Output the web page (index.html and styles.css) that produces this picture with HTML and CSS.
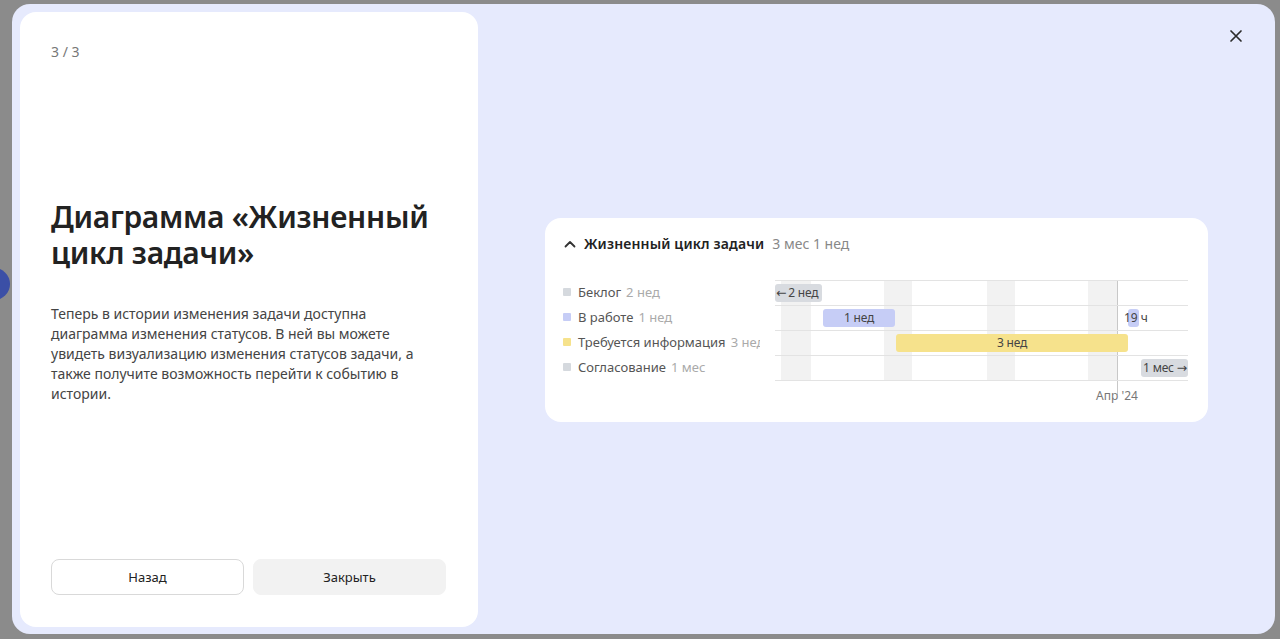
FILE: index.html
```html
<!DOCTYPE html>
<html lang="ru">
<head>
<meta charset="utf-8">
<title>Жизненный цикл задачи</title>
<link rel="stylesheet" href="styles.css">
</head>
<body>
<div class="bg-dot"></div>
<div class="modal">
  <section class="panel">
    <div class="counter">3 / 3</div>
    <h1 class="title">Диаграмма «Жизненный цикл задачи»</h1>
    <p class="desc">Теперь в истории изменения задачи доступна диаграмма изменения статусов. В ней вы можете увидеть визуализацию изменения статусов задачи, а также получите возможность перейти к событию в истории.</p>
    <div class="actions">
      <button class="btn btn-outline">Назад</button>
      <button class="btn btn-fill">Закрыть</button>
    </div>
  </section>
  <section class="stage">
    <div class="card">
      <div class="card-head">
        <svg class="chev" width="12" height="8" viewBox="0 0 12 8"><path d="M1.5 6.5 6 2l4.5 4.5" fill="none" stroke="#333" stroke-width="1.8" stroke-linecap="round" stroke-linejoin="round"/></svg>
        <span class="card-title">Жизненный цикл задачи</span>
        <span class="card-dur">3 мес 1 нед</span>
      </div>
      <div class="chart">
        <ul class="legend">
          <li><i class="sq sq-gray"></i><span class="lbl">Беклог</span><span class="dur">2 нед</span></li>
          <li><i class="sq sq-blue"></i><span class="lbl">В работе</span><span class="dur">1 нед</span></li>
          <li><i class="sq sq-yellow"></i><span class="lbl">Требуется информация</span><span class="dur">3 нед</span></li>
          <li><i class="sq sq-gray"></i><span class="lbl">Согласование</span><span class="dur">1 мес</span></li>
        </ul>
        <div class="plot">
          <div class="grid">
            <span class="stripe" style="left:6px;width:30px"></span>
            <span class="stripe" style="left:109px;width:28px"></span>
            <span class="stripe" style="left:212px;width:28px"></span>
            <span class="stripe" style="left:313px;width:29px"></span>
            <span class="marker" style="left:342px"></span>
            <div class="row"><span class="bar bar-gray bar-left" style="left:0;width:47px"><span class="arr">←</span>2 нед</span></div>
            <div class="row"><span class="bar bar-blue" style="left:48px;width:72px">1 нед</span><span class="bar bar-blue" style="left:353px;width:11px"></span><span class="bar-out" style="left:349px">19 ч</span></div>
            <div class="row"><span class="bar bar-yellow" style="left:121px;width:232px">3 нед</span></div>
            <div class="row"><span class="bar bar-gray bar-right" style="left:366px;width:47px">1 мес <span class="arr">→</span></span></div>
          </div>
          <div class="axis"><span class="tick" style="left:342px">Апр '24</span></div>
        </div>
      </div>
    </div>
  </section>
  <button class="close" aria-label="Закрыть">
    <svg width="14" height="14" viewBox="0 0 14 14"><path d="M2 2l10 10M12 2 2 12" stroke="#2b2b2b" stroke-width="1.7" stroke-linecap="round"/></svg>
  </button>
</div>
</body>
</html>
```
FILE: styles.css
```css
* { box-sizing: border-box; }
html, body { margin: 0; padding: 0; }
body {
  width: 1280px;
  height: 639px;
  overflow: hidden;
  background: #8b8b8b;
  font-family: "Noto Sans", "Open Sans", sans-serif;
  color: #222;
  position: relative;
  padding: 4px 5px 4px 12px;
}
.bg-dot {
  position: absolute;
  left: -22px;
  top: 268px;
  width: 32px;
  height: 32px;
  border-radius: 50%;
  background: #3b4fa6;
}
.modal {
  position: relative;
  height: 630px;
  background: #e6eafd;
  border-radius: 18px;
  padding: 8px 0 7px 8px;
  display: flex;
}
.panel {
  width: 458px;
  background: #fff;
  border-radius: 16px;
  padding: 30px 32px 32px 31px;
  display: flex;
  flex-direction: column;
}
.counter {
  font-size: 14px;
  line-height: 20px;
  color: #777;
}
.title {
  margin: 137px 0 0;
  font-size: 30px;
  line-height: 36px;
  font-weight: 600;
  color: #222;
  letter-spacing: -0.3px;
}
.desc {
  margin: 33px 0 0;
  font-size: 14px;
  line-height: 20px;
  color: #444;
}
.actions {
  margin-top: auto;
  display: flex;
  gap: 9px;
}
.btn {
  flex: 1;
  height: 36px;
  border-radius: 8px;
  font-family: inherit;
  font-size: 13px;
  color: #222;
  cursor: pointer;
}
.btn-outline { background: #fff; border: 1px solid #d9d9d9; }
.btn-fill { background: #f2f2f2; border: 1px solid #f2f2f2; }
.stage {
  flex: 1;
  display: flex;
  align-items: center;
  justify-content: center;
}
.card {
  width: 663px;
  height: 204px;
  background: #fff;
  border-radius: 16px;
  padding: 16px 20px 20px 18px;
}
.card-head {
  display: flex;
  align-items: center;
  height: 20px;
  font-size: 14px;
}
.chev { margin-left: 1px; margin-right: 8px; }
.card-title { font-weight: 600; color: #222; letter-spacing: 0.15px; }
.card-dur { margin-left: 8px; color: #888; }
.chart {
  margin-top: 26px;
  display: flex;
  gap: 15px;
}
.legend {
  list-style: none;
  margin: 0;
  padding: 0;
  width: 197px;
  overflow: hidden;
}
.legend li {
  height: 25px;
  display: flex;
  align-items: center;
  white-space: nowrap;
  font-size: 13px;
}
.sq { width: 8px; height: 8px; border-radius: 1px; margin-right: 7px; flex: none; }
.sq-gray { background: #d5d9de; }
.sq-blue { background: #c6cdf6; }
.sq-yellow { background: #f6e28c; }
.lbl { color: #555; }
.dur { color: #aaa; margin-left: 5px; }
.plot { width: 413px; }
.grid {
  position: relative;
  border-top: 1px solid #e3e3e3;
}
.stripe {
  position: absolute;
  top: 0;
  bottom: 0;
  background: #f2f2f2;
}
.marker {
  position: absolute;
  top: 0;
  bottom: -14px;
  width: 1px;
  background: #c8c8c8;
}
.row {
  position: relative;
  height: 25px;
  border-bottom: 1px solid #e3e3e3;
}
.bar {
  position: absolute;
  top: 3px;
  height: 18px;
  border-radius: 3px;
  font-size: 12px;
  line-height: 18px;
  text-align: center;
  color: #444;
  white-space: nowrap;
  letter-spacing: -0.2px;
}
.bar-left { text-align: left; padding-left: 1px; }
.bar-right { text-align: right; padding-right: 1px; }
.arr { font-family: "DejaVu Sans", sans-serif; font-size: 12.5px; margin-right: 2px; }
.bar-right .arr { margin-right: 0; }
.bar-gray { background: #d8dbe0; }
.bar-blue { background: #c6cdf6; }
.bar-yellow { background: #f6e28c; }
.bar-out {
  position: absolute;
  top: 3px;
  line-height: 18px;
  font-size: 12px;
  color: #444;
  white-space: nowrap;
}
.axis { position: relative; height: 22px; }
.tick {
  position: absolute;
  top: 7px;
  transform: translateX(-50%);
  font-size: 12px;
  line-height: 16px;
  color: #777;
  white-space: nowrap;
}
.close {
  position: absolute;
  top: 24px;
  right: 31px;
  width: 16px;
  height: 16px;
  padding: 1px;
  border: 0;
  background: transparent;
  cursor: pointer;
}
```
